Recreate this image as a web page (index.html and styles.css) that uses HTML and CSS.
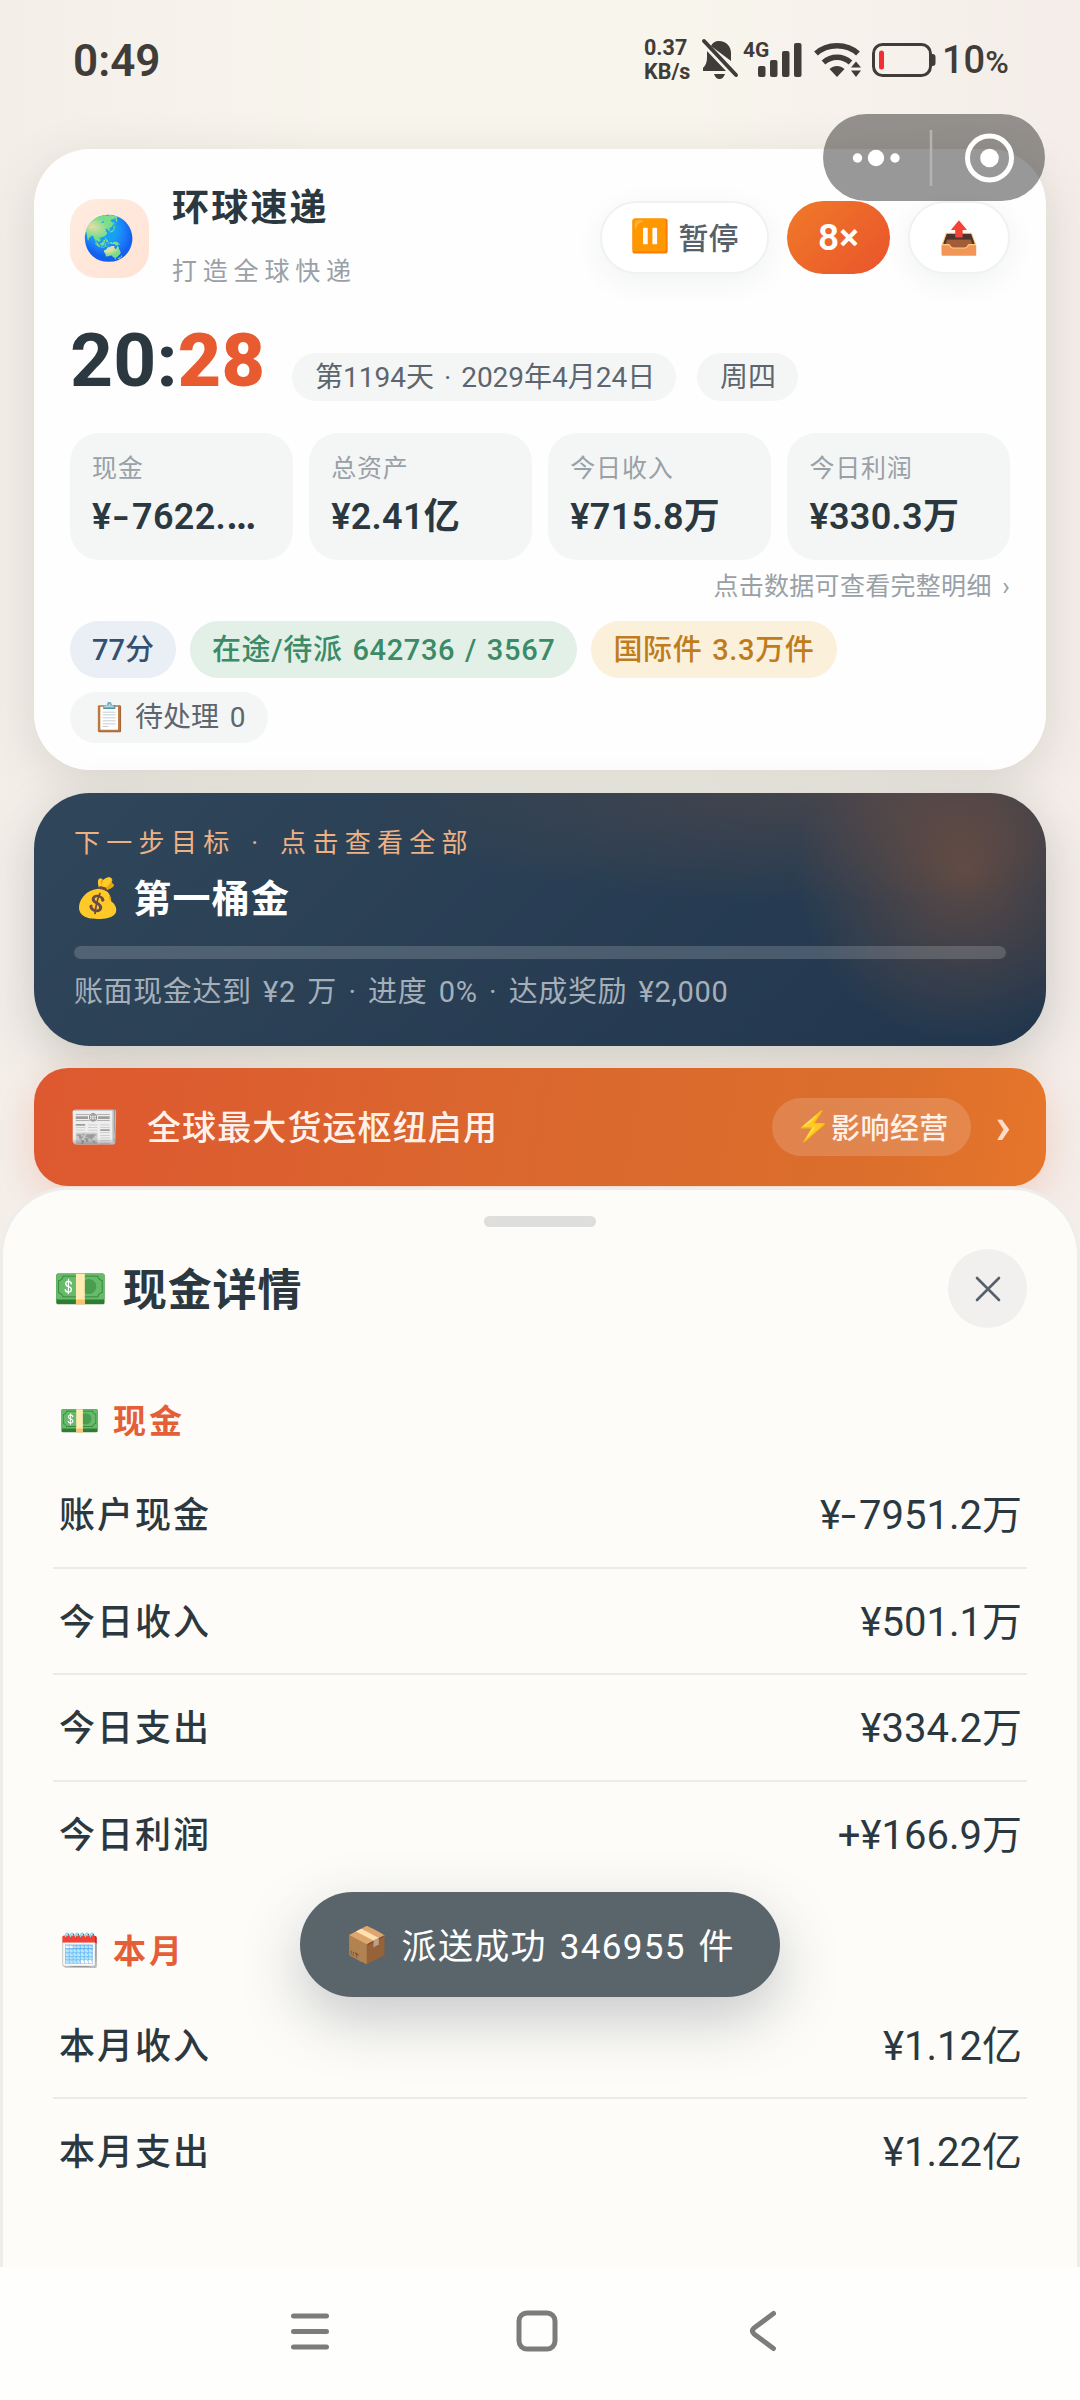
FILE: index.html
```html
<!DOCTYPE html>
<html lang="zh-CN">
<head>
<meta charset="utf-8">
<title>环球速递</title>
<link rel="stylesheet" href="styles.css">
</head>
<body>
<div class="screen">
  <header class="status">
    <span class="status-time">0:49</span>
    <div class="status-right">
      <span class="net-speed"><span>0.37</span><span>KB/s</span></span>
      <svg class="ic-bell" width="38" height="42" viewBox="0 0 38 42"><path fill="#403c38" d="M10 8C12 4 15 3 18 3c7 0 12 5 12 12v8zM6 13l19 20H2v-3c3-3 4-6 4-11zM13 36h11c-1 3-3 5-5.500 5s-4.500-2-5.500-5z"/><path d="M3 3l32 34" stroke="#403c38" stroke-width="4" stroke-linecap="round"/></svg>
      <span class="signal"><span class="gen">4G</span>
        <svg width="44" height="34" viewBox="0 0 44 34" fill="#403c38"><rect x="0" y="23" width="7.500" height="11" rx="2"/><rect x="12" y="17" width="7.500" height="17" rx="2"/><rect x="24" y="8" width="7.500" height="26" rx="2"/><rect x="36" y="0" width="7.500" height="34" rx="2"/></svg>
      </span>
      <svg class="ic-wifi" width="48" height="36" viewBox="0 0 48 36"><g fill="none" stroke="#403c38" stroke-width="5.500"><path d="M2 11.500C13 1 33 1 44 11.500"/><path d="M9.500 20.500c8-7 19-7 27 0"/></g><path fill="#403c38" d="M15.500 27c4.500-4 10.500-4 15 0L23 35zM37 25.500l5-6 5 6zM37 28.500h10l-5 6.500z"/></svg>
      <svg class="ic-battery" width="64" height="34" viewBox="0 0 64 34"><rect x="1.500" y="1.500" width="57" height="31" rx="9" fill="none" stroke="#403c38" stroke-width="3"/><path fill="#403c38" d="M59 11h1.500a3 3 0 0 1 3 3v6a3 3 0 0 1-3 3H59z"/><rect x="7" y="7.500" width="5" height="19" rx="2.500" fill="#f23030"/></svg>
      <span class="percent">10<small>%</small></span>
    </div>
  </header>

  <div class="capsule">
    <svg width="222" height="88" viewBox="0 0 222 88"><g fill="#fff"><circle cx="34.500" cy="44" r="4.700"/><circle cx="53" cy="44" r="8.200"/><circle cx="72" cy="44" r="4.700"/><circle cx="166.500" cy="44" r="9.300"/></g><path d="M108 16v56" stroke="#b3b3b1" stroke-width="2.500"/><circle cx="166.500" cy="44" r="22" fill="none" stroke="#fff" stroke-width="5"/></svg>
  </div>

  <main class="app">
    <section class="card overview">
      <div class="brand">
        <div class="logo">🌏</div>
        <div class="brand-text">
          <h1>环球速递</h1>
          <p>打造全球快递</p>
        </div>
        <div class="actions">
          <button class="btn btn-pause"><span class="emo">⏸️</span>暂停</button>
          <button class="btn btn-speed">8×</button>
          <button class="btn btn-share">📤</button>
        </div>
      </div>
      <div class="clock-row">
        <span class="clock">20:<b>28</b></span>
        <span class="chip date">第1194天 · 2029年4月24日</span>
        <span class="chip week">周四</span>
      </div>
      <div class="stats">
        <div class="stat"><span class="k">现金</span><span class="v">¥<span class="minus">-</span>7622.<span class="dots">…</span></span></div>
        <div class="stat"><span class="k">总资产</span><span class="v">¥2.41亿</span></div>
        <div class="stat"><span class="k">今日收入</span><span class="v">¥715.8万</span></div>
        <div class="stat"><span class="k">今日利润</span><span class="v">¥330.3万</span></div>
      </div>
      <p class="hint">点击数据可查看完整明细 ›</p>
      <div class="tags">
        <span class="tag blue">77分</span>
        <span class="tag green">在途/待派 642736 / 3567</span>
        <span class="tag amber">国际件 3.3万件</span>
        <span class="tag plain"><span class="emo">📋</span>待处理 0</span>
      </div>
    </section>

    <section class="card goal">
      <p class="goal-label">下一步目标 · 点击查看全部</p>
      <h2><span class="emo">💰</span>第一桶金</h2>
      <div class="bar"></div>
      <p class="goal-desc">账面现金达到 ¥2 万 · 进度 0% · 达成奖励 ¥2,000</p>
    </section>

    <section class="news">
      <span class="emo">📰</span>
      <span class="news-title">全球最大货运枢纽启用</span>
      <span class="news-tag"><span class="emo">⚡</span>影响经营</span>
      <span class="news-more">›</span>
    </section>
  </main>

  <section class="sheet">
    <div class="handle"></div>
    <div class="sheet-head">
      <h2><span class="emo">💵</span>现金详情</h2>
      <button class="close" aria-label="关闭"><svg width="26" height="26" viewBox="0 0 26 26"><path d="M2 2l22 22M24 2L2 24" stroke="#56616b" stroke-width="2.600" stroke-linecap="round"/></svg></button>
    </div>
    <h3 class="first"><span class="emo">💵</span>现金</h3>
    <dl>
      <div class="row"><dt>账户现金</dt><dd>¥<span class="minus">-</span>7951.2万</dd></div>
      <div class="row"><dt>今日收入</dt><dd>¥501.1万</dd></div>
      <div class="row"><dt>今日支出</dt><dd>¥334.2万</dd></div>
      <div class="row"><dt>今日利润</dt><dd>+¥166.9万</dd></div>
    </dl>
    <h3 class="second"><span class="emo">🗓️</span>本月</h3>
    <dl>
      <div class="row"><dt>本月收入</dt><dd>¥1.12亿</dd></div>
      <div class="row"><dt>本月支出</dt><dd>¥1.22亿</dd></div>
    </dl>
  </section>

  <div class="toast"><span class="emo">📦</span>派送成功 346955 件</div>

  <nav class="sysnav">
    <svg width="40" height="40" viewBox="0 0 40 40"><path d="M3.500 5h33M3.500 20.500h33M3.500 36h33" stroke="#7c7c7a" stroke-width="5" stroke-linecap="round"/></svg>
    <svg width="42" height="42" viewBox="0 0 42 42"><rect x="3" y="3" width="36" height="36" rx="8" fill="none" stroke="#7c7c7a" stroke-width="5"/></svg>
    <svg width="28" height="42" viewBox="0 0 28 42"><path d="M24.500 3.500L5 18q-3 3 0 6l19.500 14.500" fill="none" stroke="#7c7c7a" stroke-width="5" stroke-linecap="round" stroke-linejoin="round"/></svg>
  </nav>
</div>
</body>
</html>
```

FILE: styles.css
```css
* { box-sizing: border-box; margin: 0; padding: 0; }
body {
  font-family: Roboto, "Noto Sans CJK SC", "Noto Color Emoji", sans-serif;
  color: #2b3840;
  background: #f5f1ea;
}
button { font: inherit; border: 0; color: inherit; }
.screen {
  position: relative;
  width: 1080px;
  height: 2400px;
  overflow: hidden;
  display: flex;
  flex-direction: column;
  background: linear-gradient(90deg, #f4eee9 0, #f8f5ed 30%, #f8f5ed 65%, #f4ede9 100%);
}
.emo { font-weight: 400; letter-spacing: 0; }

/* status bar */
.status {
  flex: none;
  height: 149px;
  padding: 31px 68px 0 73px;
  display: flex;
  justify-content: space-between;
  align-items: flex-start;
  color: #403c38;
}
.status-time { font-size: 44px; font-weight: 600; line-height: 60px; }
.status-right { display: flex; align-items: center; height: 60px; }
.net-speed { display: flex; flex-direction: column; width: 57px; font-size: 21.500px; font-weight: 700; line-height: 24px; padding-bottom: 2px; }
.ic-bell { margin-top: -4px; }
.signal { display: flex; align-items: flex-end; margin-left: 4px; width: 60px; height: 38px; padding-bottom: 3px; }
.signal svg { flex: none; margin-left: -13px; }
.gen { font-size: 21px; font-weight: 700; line-height: 16px; align-self: flex-start; width: 28px; flex: none; }
.ic-wifi { margin-left: 11px; margin-top: -2px; }
.ic-battery { margin-left: 10px; margin-top: -2px; }
.percent { margin-left: 6px; width: 70px; font-size: 38px; font-weight: 500; line-height: 60px; white-space: nowrap; }
.percent small { font-size: 32px; }
.capsule {
  position: absolute;
  left: 823px;
  top: 114px;
  width: 222px;
  height: 87px;
  border-radius: 44px;
  background: rgba(0, 0, 0, .4);
  z-index: 3;
}

/* cards */
.app { flex: none; height: 1038px; padding: 0 34px; }
.card { border-radius: 56px; }
.overview {
  height: 621px;
  padding: 29px 36px 0;
  background: #fefefe;
  box-shadow: 0 12px 50px rgba(60, 70, 50, .15);
}
.brand { display: flex; align-items: center; height: 120px; }
.logo {
  width: 79px; height: 79px; border-radius: 27px;
  background: linear-gradient(135deg, #ffece0, #ffe3d5);
  display: flex; align-items: center; justify-content: center;
  font-size: 43px;
}
.brand-text { margin-left: 23px; flex: 1; display: flex; flex-direction: column; gap: 18px; padding-bottom: 1px; }
.brand-text h1 { font-size: 37px; font-weight: 700; line-height: 50px; letter-spacing: 2.200px; }
.brand-text p { font-size: 25px; line-height: 40px; letter-spacing: 5.800px; color: #9aa0a6; }
.actions { display: flex; gap: 18px; margin-top: -1px; }
.btn {
  height: 73px; border-radius: 37px; background: #fff;
  display: flex; align-items: center; justify-content: center;
  font-size: 30px; font-weight: 500; color: #56616b;
}
.btn-pause { width: 169px; gap: 8px; padding-bottom: 3px; border: 2px solid #f0f1f1; box-shadow: 0 8px 30px rgba(40, 50, 60, .06); }
.btn-pause .emo { font-size: 32px; }
.btn-speed { width: 103px; background: linear-gradient(135deg, #f07a28, #e9532c); color: #fff; font-size: 37px; font-weight: 600; }
.btn-share { width: 102px; border: 2px solid #f0f1f1; box-shadow: 0 8px 30px rgba(40, 50, 60, .06); font-size: 32px; }

.clock-row { display: flex; align-items: flex-end; height: 78px; margin-top: 25px; }
.clock { width: 222px; font-size: 75px; font-weight: 700; line-height: 81px; letter-spacing: .2px; }
.clock b { color: #e85a30; }
.chip { height: 48px; line-height: 49px; padding: 0 23px; border-radius: 24px; background: #f4f6f6; font-size: 28px; color: #5d666e; white-space: nowrap; word-spacing: 3px; }
.date { width: 384px; }
.week { width: 101px; margin-left: 21px; }

.stats { display: grid; grid-template-columns: repeat(4, 1fr); gap: 16.600px; margin-top: 32px; }
.stat { min-width: 0; height: 127px; border-radius: 29px; background: #f4f6f6; padding: 19px 22px 0; display: flex; flex-direction: column; }
.k { font-size: 25px; line-height: 34px; letter-spacing: .8px; color: #99a0a6; }
.v { font-size: 36px; line-height: 50px; margin-top: 6px; font-weight: 600; white-space: nowrap; letter-spacing: .3px; }
.dots { font-size: 42px; line-height: 40px; }
.hint { margin-top: 11px; text-align: right; font-size: 25px; line-height: 32px; letter-spacing: .3px; word-spacing: 4px; color: #99a0a6; }
.tags { display: flex; flex-wrap: wrap; gap: 14px; margin-top: 18px; }
.tag { height: 57px; line-height: 58px; padding: 0 22px; border-radius: 29px; font-size: 29px; font-weight: 500; white-space: nowrap; letter-spacing: .65px; word-spacing: 2px; }
.blue { background: #eaeff5; color: #345070; letter-spacing: 0; }
.green { background: #e2f0e7; color: #3b8a68; }
.amber { background: #fbf0da; color: #bf7c1c; }
.plain { height: 51px; line-height: 52px; background: #f4f6f6; color: #5d666e; font-size: 28px; font-weight: 400; letter-spacing: 0; word-spacing: 4px; }
.plain .emo { margin-right: 8px; }

.goal {
  height: 253px; margin-top: 23px; padding: 30px 40px 0;
  color: #fff;
  background:
    radial-gradient(circle 230px at 931px 77px, rgba(240, 115, 40, .28), rgba(240, 115, 40, 0) 74%),
    radial-gradient(ellipse 460px 110px at 780px 0, rgba(240, 115, 40, .14), rgba(240, 115, 40, 0)),
    linear-gradient(135deg, #30465a, #21364d);
  box-shadow: 0 14px 50px rgba(40, 55, 50, .22);
}
.goal-label { font-size: 26px; line-height: 40px; letter-spacing: 6.300px; word-spacing: 3px; color: #efb183; white-space: nowrap; }
.goal h2 { display: flex; align-items: center; gap: 12px; height: 50px; margin-top: 7px; font-size: 38px; font-weight: 700; letter-spacing: 1.200px; }
.goal h2 .emo { padding-top: 6px; }
.bar { height: 13px; margin-top: 26px; border-radius: 7px; background: rgba(255, 255, 255, .17); }
.goal-desc { margin-top: 13px; font-size: 29px; line-height: 40px; letter-spacing: .6px; word-spacing: 3.700px; color: #a5afba; white-space: nowrap; }

.news {
  height: 118px; margin-top: 22px; padding: 0 35px 3px;
  border-radius: 34px;
  display: flex; align-items: center;
  color: #fff1ea;
  background: linear-gradient(100deg, #de5830, #da682e 50%, #dc6f2c 85%, #e7762a);
  box-shadow: 0 12px 40px rgba(220, 90, 50, .22);
}
.news > .emo { width: 78px; padding-top: 3px; font-size: 41px; }
.news-title { flex: 1; font-size: 34px; font-weight: 500; letter-spacing: 1.100px; }
.news-tag { display: flex; align-items: center; width: 199px; height: 58px; margin-top: 3px; padding: 0 0 2px 23px; border-radius: 29px; background: rgba(255, 255, 255, .16); font-size: 29px; font-weight: 500; letter-spacing: .4px; white-space: nowrap; }
.news-more { width: 40px; text-align: right; font-size: 52px; font-weight: 700; color: #ffdcc9; }

/* bottom sheet */
.sheet {
  position: relative;
  flex: none;
  height: 1080px;
  padding: 26px 50px 0;
  border: 3px solid #eeedea;
  border-bottom: 0;
  border-radius: 68px 68px 0 0;
  background: #fdfcf9;
}
.handle { width: 112px; height: 11px; margin: 0 auto; border-radius: 6px; background: #dededd; }
.sheet-head { display: flex; align-items: center; justify-content: space-between; height: 79px; margin-top: 22px; }
.sheet h2 { display: flex; align-items: center; gap: 15px; font-size: 44px; font-weight: 700; letter-spacing: .9px; padding-bottom: 3px; }
.sheet h2 .emo { padding-top: 4px; }
.close { width: 79px; height: 79px; border-radius: 50%; background: #f1f0ef; display: flex; align-items: center; justify-content: center; }
.sheet h3 { display: flex; align-items: center; gap: 13px; height: 50px; padding-left: 6px; font-size: 33px; font-weight: 600; letter-spacing: 3px; color: #e45f38; }
.sheet h3 .emo { padding-top: 2px; }
.sheet .first { margin-top: 66px; margin-bottom: 18px; }
.sheet .second { margin-top: 36px; margin-bottom: 18px; }
.row { display: flex; align-items: center; justify-content: space-between; height: 106.600px; padding: 0 5px 4px 6px; border-bottom: 2px solid #ecebe8; }
.row:last-child { border-bottom: 0; padding-bottom: 6px; }
.row dt { font-size: 36px; font-weight: 500; letter-spacing: 2px; }
.row dd { font-size: 40px; }
.minus { display: inline-block; transform: scaleX(1.35); transform-origin: 0 50%; margin-right: 7px; }

.toast {
  position: absolute;
  left: 300px;
  top: 1892px;
  width: 480px;
  height: 105px;
  padding: 0 0 3px 45px;
  border-radius: 53px;
  display: flex; align-items: center; gap: 13px;
  color: #fff;
  font-size: 35px;
  letter-spacing: 1.300px;
  word-spacing: 3px;
  white-space: nowrap;
  background: #5a656b;
  box-shadow: 0 22px 60px rgba(40, 50, 60, .25);
}
.toast .emo { padding-top: 4px; }

.sysnav {
  position: relative;
  flex: 1;
  background: #fefefd;
  padding: 0 303px 2px 290px;
  display: grid;
  grid-template-columns: 226px 1fr auto;
  align-items: center;
}
.sysnav svg { margin-top: -3px; }
```
